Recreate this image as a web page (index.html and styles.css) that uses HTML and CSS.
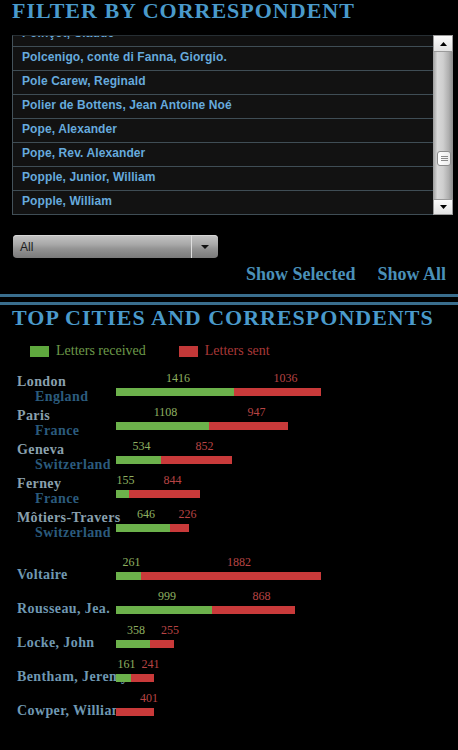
FILE: index.html
```html
<!DOCTYPE html>
<html lang="en">
<head>
<meta charset="utf-8">
<title>Filter by correspondent</title>
<link rel="stylesheet" href="styles.css">
</head>
<body>
<h1 class="heading">FILTER BY CORRESPONDENT</h1>

<div class="listbox">
  <ul class="list">
    <li class="item item-partial">Poinçot, Claude</li>
    <li class="item">Polcenigo, conte di Fanna, Giorgio.</li>
    <li class="item">Pole Carew, Reginald</li>
    <li class="item">Polier de Bottens, Jean Antoine Noé</li>
    <li class="item">Pope, Alexander</li>
    <li class="item">Pope, Rev. Alexander</li>
    <li class="item">Popple, Junior, William</li>
    <li class="item">Popple, William</li>
  </ul>
  <div class="scrollbar">
    <div class="sb-btn sb-up"><svg width="7" height="4" viewBox="0 0 7 4"><path d="M0 4L3.5 0L7 4Z" fill="#000"/></svg></div>
    <div class="sb-track">
      <div class="sb-thumb"><svg width="7" height="7" viewBox="0 0 7 7"><path d="M0 1.5H7M0 3.5H7M0 5.5H7" stroke="#8a8a8a" stroke-width="1"/></svg></div>
    </div>
    <div class="sb-btn sb-down"><svg width="7" height="4" viewBox="0 0 7 4"><path d="M0 0L7 0L3.5 4Z" fill="#000"/></svg></div>
  </div>
</div>

<div class="select">
  <span class="select-value">All</span>
  <span class="select-arrow"><svg width="8" height="4" viewBox="0 0 8 4"><path d="M0 0H8L4 4Z" fill="#111"/></svg></span>
</div>

<div class="actions">
  <a class="action">Show Selected</a>
  <a class="action">Show All</a>
</div>

<div class="rule"></div>

<h2 class="heading heading-2">TOP CITIES AND CORRESPONDENTS</h2>

<div class="legend">
  <span class="legend-item legend-received"><span class="swatch swatch-received"></span>Letters received</span>
  <span class="legend-item legend-sent"><span class="swatch swatch-sent"></span>Letters sent</span>
</div>

<div class="chart chart-cities">
  <div class="row" style="--r:118px;--s:87px">
    <div class="label"><div class="place">London</div><div class="country">England</div></div>
    <div class="bars">
      <div class="values"><span class="v v-r">1416</span><span class="v v-s">1036</span></div>
      <div class="bar"><span class="seg seg-r"></span><span class="seg seg-s"></span></div>
    </div>
  </div>
  <div class="row" style="--r:93px;--s:79px">
    <div class="label"><div class="place">Paris</div><div class="country">France</div></div>
    <div class="bars">
      <div class="values"><span class="v v-r">1108</span><span class="v v-s">947</span></div>
      <div class="bar"><span class="seg seg-r"></span><span class="seg seg-s"></span></div>
    </div>
  </div>
  <div class="row" style="--r:45px;--s:71px">
    <div class="label"><div class="place">Geneva</div><div class="country">Switzerland</div></div>
    <div class="bars">
      <div class="values"><span class="v v-r">534</span><span class="v v-s">852</span></div>
      <div class="bar"><span class="seg seg-r"></span><span class="seg seg-s"></span></div>
    </div>
  </div>
  <div class="row" style="--r:13px;--s:71px">
    <div class="label"><div class="place">Ferney</div><div class="country">France</div></div>
    <div class="bars">
      <div class="values"><span class="v v-r">155</span><span class="v v-s">844</span></div>
      <div class="bar"><span class="seg seg-r"></span><span class="seg seg-s"></span></div>
    </div>
  </div>
  <div class="row" style="--r:54px;--s:19px">
    <div class="label"><div class="place">Môtiers-Travers</div><div class="country">Switzerland</div></div>
    <div class="bars">
      <div class="values"><span class="v v-r">646</span><span class="v v-s">226</span></div>
      <div class="bar"><span class="seg seg-r"></span><span class="seg seg-s"></span></div>
    </div>
  </div>
</div>

<div class="chart chart-people">
  <div class="row" style="--r:25px;--s:180px">
    <div class="label"><div class="person">Voltaire</div></div>
    <div class="bars">
      <div class="values"><span class="v v-r">261</span><span class="v v-s">1882</span></div>
      <div class="bar"><span class="seg seg-r"></span><span class="seg seg-s"></span></div>
    </div>
  </div>
  <div class="row" style="--r:96px;--s:83px">
    <div class="label"><div class="person">Rousseau, Jea.</div></div>
    <div class="bars">
      <div class="values"><span class="v v-r">999</span><span class="v v-s">868</span></div>
      <div class="bar"><span class="seg seg-r"></span><span class="seg seg-s"></span></div>
    </div>
  </div>
  <div class="row" style="--r:34px;--s:24px">
    <div class="label"><div class="person">Locke, John</div></div>
    <div class="bars">
      <div class="values"><span class="v v-r">358</span><span class="v v-s">255</span></div>
      <div class="bar"><span class="seg seg-r"></span><span class="seg seg-s"></span></div>
    </div>
  </div>
  <div class="row" style="--r:15px;--s:23px">
    <div class="label"><div class="person">Bentham, Jeremy</div></div>
    <div class="bars">
      <div class="values"><span class="v v-r">161</span><span class="v v-s">241</span></div>
      <div class="bar"><span class="seg seg-r"></span><span class="seg seg-s"></span></div>
    </div>
  </div>
  <div class="row" style="--r:0px;--s:38px">
    <div class="label"><div class="person">Cowper, William</div></div>
    <div class="bars">
      <div class="values"><span class="v v-r"></span><span class="v v-s">401</span></div>
      <div class="bar"><span class="seg seg-r"></span><span class="seg seg-s"></span></div>
    </div>
  </div>
</div>
</body>
</html>
```

FILE: styles.css
```css
html, body {
  margin: 0;
  padding: 0;
  background: #000;
}

body {
  width: 458px;
  height: 750px;
  overflow: hidden;
  font-family: "Liberation Serif", "Times New Roman", serif;
}

.heading {
  margin: 0;
  padding-left: 12px;
  font: bold 22px/22px "Liberation Serif", serif;
  letter-spacing: 1px;
  color: #4a9acb;
  white-space: nowrap;
}

.heading-2 {
  margin-top: 2px;
}

/* ---------- list box ---------- */
.listbox {
  display: flex;
  width: 441px;
  height: 180px;
  margin: 13px 0 0 12px;
}

.list {
  flex: 1;
  margin: 0;
  padding: 0;
  list-style: none;
  overflow: hidden;
  background: #121212;
  border-top: 1px solid #262e33;
  border-left: 1px solid #44525a;
}

.item {
  height: 21px;
  padding: 0 0 2px 9px;
  border-bottom: 1px solid #3f4d55;
  font: bold 12px/21px "Liberation Sans", Arial, sans-serif;
  letter-spacing: 0.1px;
  color: #66aadd;
  white-space: nowrap;
}

.item-partial {
  margin-top: -13px;
}

.scrollbar {
  width: 20px;
  display: flex;
  flex-direction: column;
  background: linear-gradient(90deg, #9c9c9c 0, #d8d8d8 22%, #cfcfcf 50%, #b0b0b0 78%, #8a8a8a 100%);
}

.sb-btn {
  display: flex;
  align-items: center;
  justify-content: center;
  background: linear-gradient(#fbfbfb, #e2e2e2);
  border: 1px solid #9a9a9a;
  box-sizing: border-box;
}

.sb-up {
  height: 17px;
}

.sb-down {
  height: 16px;
}

.sb-track {
  flex: 1;
  padding: 99px 2px 0 4px;
}

.sb-thumb {
  height: 15px;
  box-sizing: border-box;
  display: flex;
  align-items: center;
  justify-content: center;
  background: linear-gradient(90deg, #ffffff, #ececec);
  border: 1px solid #8c8c8c;
  border-radius: 3px;
}

/* ---------- select ---------- */
.select {
  display: flex;
  width: 205px;
  height: 23px;
  margin: 20px 0 0 13px;
  border-radius: 4px;
  background: linear-gradient(#c4c4c4 0%, #a9a9a9 40%, #939393 60%, #7a7a7a 100%);
  box-shadow: inset 0 1px 0 #d6d6d6;
  overflow: hidden;
}

.select-value {
  flex: 1;
  padding-left: 7px;
  font: 12px/24px "Liberation Sans", Arial, sans-serif;
  color: #1c1c1c;
}

.select-arrow {
  width: 26px;
  display: flex;
  align-items: center;
  justify-content: center;
  border-left: 1px solid #dedede;
}

/* ---------- actions ---------- */
.actions {
  display: flex;
  justify-content: flex-end;
  gap: 22px;
  margin-top: 7px;
  padding-right: 12px;
  font: bold 18px/18px "Liberation Serif", serif;
  color: #4a90b8;
}

.action {
  color: inherit;
  text-decoration: none;
}

.rule {
  height: 5px;
  margin-top: 11px;
  border-top: 3px solid #3a6e8e;
  border-bottom: 3px solid #3a6e8e;
}

/* ---------- legend ---------- */
.legend {
  display: flex;
  align-items: center;
  height: 16px;
  margin-top: 14px;
  padding-left: 30px;
  font: 14px/16px "Liberation Serif", serif;
}

.legend-item {
  display: flex;
  align-items: center;
  gap: 7px;
}

.legend-received {
  color: #6d9a4a;
  margin-right: 33px;
}

.legend-sent {
  color: #a83838;
}

.swatch {
  width: 19px;
  height: 11px;
}

.swatch-received {
  background: #5fa83e;
}

.swatch-sent {
  background: #c23838;
}

/* ---------- chart ---------- */
.chart-cities {
  margin-top: 13px;
}

.chart-people {
  margin-top: 16px;
}

.row {
  display: flex;
  height: 32px;
  margin-bottom: 2px;
  padding-left: 17px;
}

.label {
  width: 99px;
  flex-shrink: 0;
  padding-top: 3px;
  white-space: nowrap;
  font: bold 14px/14.5px "Liberation Serif", serif;
  letter-spacing: 0.4px;
}

.chart-people .label {
  padding-top: 12px;
}

.place {
  color: #8aa0ae;
}

.country {
  padding-left: 18px;
  color: #2b5b7d;
}

.person {
  color: #6f98b2;
}

.bars {
  position: relative;
}

.values {
  display: flex;
  height: 12px;
  margin-bottom: 4px;
  font: 12px/12px "Liberation Serif", serif;
}

.v {
  flex-shrink: 0;
  box-sizing: border-box;
  display: flex;
  justify-content: center;
  white-space: nowrap;
}

.v-r {
  width: var(--r);
  padding-left: 6px;
  color: #8fb060;
}

.v-s {
  width: var(--s);
  padding-left: 16px;
  color: #b84444;
}

.bar {
  display: flex;
  height: 8px;
}

.seg {
  flex-shrink: 0;
}

.seg-r {
  width: var(--r);
  background: #6cb14b;
}

.seg-s {
  width: var(--s);
  background: #c93a3a;
}
```
